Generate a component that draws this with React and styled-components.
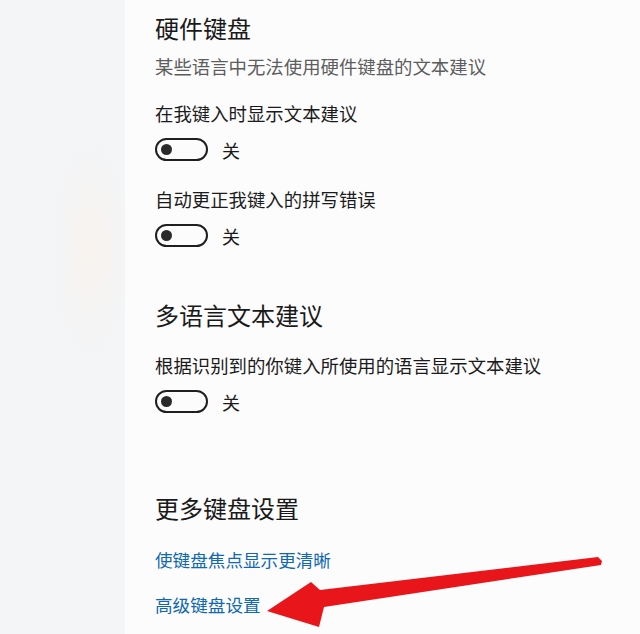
import styled, { createGlobalStyle } from 'styled-components'

const GlobalStyle = createGlobalStyle`
  html, body {
    margin: 0;
    padding: 0;
    background: #fcfcfd;
  }
  body {
    font-family: "Noto Sans CJK SC", "Noto Sans", sans-serif;
    color: #1b1b1b;
  }
`

const sections = [
  {
    title: '硬件键盘',
    description: '某些语言中无法使用硬件键盘的文本建议',
    settings: ['在我键入时显示文本建议', '自动更正我键入的拼写错误'],
  },
  {
    title: '多语言文本建议',
    settings: ['根据识别到的你键入所使用的语言显示文本建议'],
  },
]

function App() {
  return (
    <>
      <GlobalStyle />
      <Page>
        <SideBar />
        <Main>
          {sections.map((section, i) => (
            <Section key={section.title} $first={i === 0}>
              <Heading>{section.title}</Heading>
              {section.description && (
                <Description>{section.description}</Description>
              )}
              {section.settings.map((label, j) => (
                <Setting key={label} $first={j === 0}>
                  <Label>{label}</Label>
                  <ToggleRow>
                    <Toggle role='switch' aria-checked='false'>
                      <Knob />
                    </Toggle>
                    <State>关</State>
                  </ToggleRow>
                </Setting>
              ))}
            </Section>
          ))}

          <MoreSection>
            <Heading>更多键盘设置</Heading>
            <Links>
              <Link href='#'>使键盘焦点显示更清晰</Link>
              <Link href='#'>高级键盘设置</Link>
            </Links>
          </MoreSection>
        </Main>

        <Arrow viewBox='0 0 640 634' aria-hidden='true'>
          <polygon
            points='598,557 602,561 601,565 324,607 319,627 267,611 311,582 320,590'
            fill='#e8161b'
          />
        </Arrow>
      </Page>
    </>
  )
}

export default App

const Page = styled.div`
  position: relative;
  display: flex;
  width: 640px;
  height: 634px;
  overflow: hidden;
`

const SideBar = styled.div`
  flex: 0 0 125px;
  background:
    radial-gradient(ellipse 40px 110px at 90px 250px, rgba(255, 236, 218, 0.3), transparent),
    #f4f5f7;
`

const Main = styled.main`
  flex: 1;
  padding: 12px 0 0 30px;
  background: #fcfcfd;
`

const Section = styled.section`
  margin-top: ${(p) => (p.$first ? '0' : '52px')};
`

const Heading = styled.h2`
  margin: 0;
  font-size: 24px;
  line-height: 32px;
  font-weight: 400;
  color: #1a1a1a;
`

const Description = styled.p`
  margin: 9px 0 0;
  font-size: 18.4px;
  line-height: 26px;
  color: #5d5d5d;
`

const Setting = styled.div`
  margin-top: ${(p) => (p.$first ? '21px' : '25px')};
`

const Label = styled.div`
  font-size: 18.4px;
  line-height: 26px;
  color: #1b1b1b;
`

const ToggleRow = styled.div`
  display: flex;
  align-items: center;
  gap: 14px;
  margin-top: 12px;
`

const Toggle = styled.div`
  box-sizing: border-box;
  width: 53px;
  height: 23px;
  border: 2px solid #1f1f1f;
  border-radius: 12px;
  display: flex;
  align-items: center;
  padding-left: 4px;
`

const Knob = styled.span`
  width: 11px;
  height: 11px;
  border-radius: 50%;
  background: #2a2a2a;
`

const State = styled.span`
  font-size: 18px;
  line-height: 22px;
`

const MoreSection = styled.section`
  margin-top: 79px;
`

const Links = styled.div`
  display: flex;
  flex-direction: column;
  align-items: flex-start;
  gap: 19px;
  margin-top: 23px;
`

const Link = styled.a`
  font-size: 17.6px;
  line-height: 26px;
  color: #1068b0;
  text-decoration: none;
`

const Arrow = styled.svg`
  position: absolute;
  inset: 0;
  width: 640px;
  height: 634px;
  pointer-events: none;
`
